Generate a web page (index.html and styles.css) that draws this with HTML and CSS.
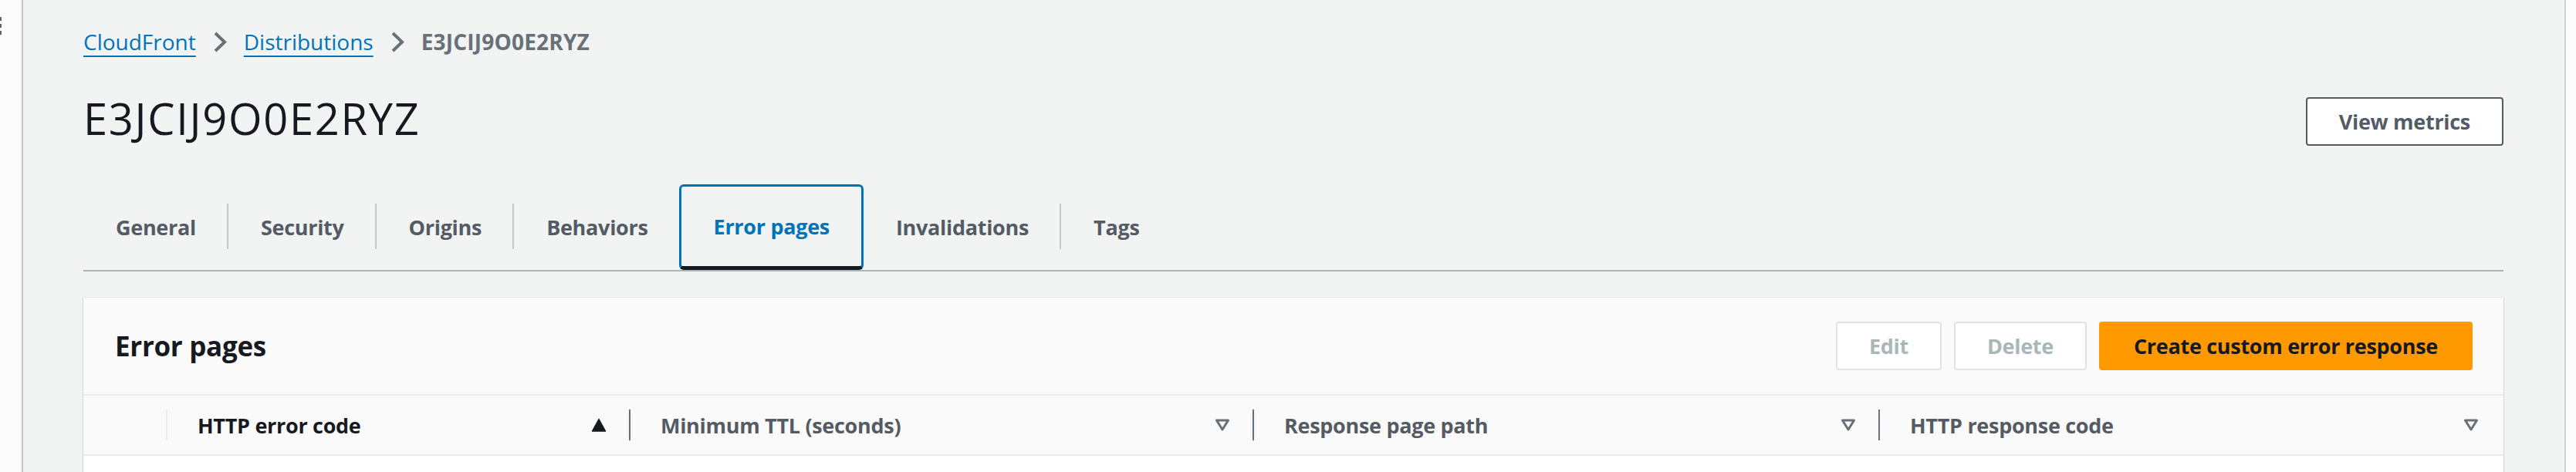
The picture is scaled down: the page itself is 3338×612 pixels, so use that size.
FILE: index.html
```html
<!DOCTYPE html>
<html lang="en">
<head>
<meta charset="utf-8">
<title>E3JCIJ9O0E2RYZ | CloudFront</title>
<link rel="stylesheet" href="styles.css">
</head>
<body>
<div class="app">
  <div class="gutter">
    <span class="grip"></span>
    <span class="grip"></span>
    <span class="grip"></span>
  </div>
  <main class="main">
    <nav class="crumbs">
      <a class="crumb-link" href="#">CloudFront</a>
      <svg class="chev" width="18" height="29" viewBox="0 0 18 29"><polyline points="3,3 15,14.5 3,26" fill="none" stroke="#687078" stroke-width="4"/></svg>
      <a class="crumb-link" href="#">Distributions</a>
      <svg class="chev" width="18" height="29" viewBox="0 0 18 29"><polyline points="3,3 15,14.5 3,26" fill="none" stroke="#687078" stroke-width="4"/></svg>
      <span class="crumb-current">E3JCIJ9O0E2RYZ</span>
    </nav>

    <div class="page-head">
      <h1 class="title">E3JCIJ9O0E2RYZ</h1>
      <button class="btn btn-normal btn-head">View metrics</button>
    </div>

    <div class="tabs">
      <div class="tab">General</div>
      <span class="tab-sep"></span>
      <div class="tab">Security</div>
      <span class="tab-sep"></span>
      <div class="tab">Origins</div>
      <span class="tab-sep"></span>
      <div class="tab">Behaviors</div>
      <span class="tab-sep"></span>
      <div class="tab tab-active">Error pages</div>
      <span class="tab-sep"></span>
      <div class="tab">Invalidations</div>
      <span class="tab-sep"></span>
      <div class="tab">Tags</div>
    </div>

    <section class="panel">
      <div class="panel-head">
        <h2 class="panel-title">Error pages</h2>
        <div class="actions">
          <button class="btn btn-disabled">Edit</button>
          <button class="btn btn-disabled">Delete</button>
          <button class="btn btn-primary">Create custom error response</button>
        </div>
      </div>
      <div class="thead">
        <div class="th th-select"></div>
        <div class="th">
          <span class="col-sep col-sep-light"></span>
          <span class="th-label th-sorted">HTTP error code</span>
          <svg class="sort" width="20" height="18" viewBox="0 0 20 18"><path d="M10 1.5 L18.5 17 H1.5 Z" fill="#16191f" stroke="#16191f" stroke-width="1.5" stroke-linejoin="round"/></svg>
        </div>
        <div class="th">
          <span class="col-sep"></span>
          <span class="th-label">Minimum TTL (seconds)</span>
          <svg class="sort" width="20" height="16" viewBox="0 0 20 16"><path d="M2.5 2 H17.5 L10 14 Z" fill="none" stroke="#687078" stroke-width="3" stroke-linejoin="round"/></svg>
        </div>
        <div class="th">
          <span class="col-sep"></span>
          <span class="th-label">Response page path</span>
          <svg class="sort" width="20" height="16" viewBox="0 0 20 16"><path d="M2.5 2 H17.5 L10 14 Z" fill="none" stroke="#687078" stroke-width="3" stroke-linejoin="round"/></svg>
        </div>
        <div class="th th-last">
          <span class="col-sep"></span>
          <span class="th-label">HTTP response code</span>
          <svg class="sort" width="20" height="16" viewBox="0 0 20 16"><path d="M2.5 2 H17.5 L10 14 Z" fill="none" stroke="#687078" stroke-width="3" stroke-linejoin="round"/></svg>
        </div>
      </div>
      <div class="tbody"></div>
    </section>
  </main>
  <div class="side"></div>
</div>
</body>
</html>
```

FILE: styles.css
```css
* { box-sizing: border-box; }

html, body {
  margin: 0;
  padding: 0;
  background: #ffffff;
}

body {
  font-family: "Open Sans", "Noto Sans", Arial, sans-serif;
  color: #16191f;
}

.app {
  display: flex;
  width: 3338px;
  height: 612px;
  overflow: hidden;
}

.gutter {
  flex: 0 0 28px;
  display: flex;
  flex-direction: column;
  gap: 4px;
  padding-top: 22px;
  background: #fcfcfc;
}

.grip {
  display: block;
  width: 2px;
  height: 5px;
  background: #5f6368;
}

.main {
  flex: 1;
  display: flex;
  flex-direction: column;
  background: #f2f3f3;
  border-left: 2px solid #c4c6c6;
  border-right: 2px solid #d0d3d3;
  padding: 34px 79px 0 78px;
}

.side {
  flex: 0 0 13px;
  background: #fcfcfc;
}

/* Breadcrumbs */
.crumbs {
  display: flex;
  align-items: center;
  gap: 22px;
  height: 40px;
  font-size: 28px;
  line-height: 40px;
}

.crumb-link {
  color: #0073bb;
  text-decoration: underline;
  text-decoration-thickness: 2px;
  text-underline-offset: 7px;
}

.chev { display: block; }

.crumb-current {
  color: #687078;
  font-weight: 700;
  letter-spacing: 0.2px;
}

/* Page header */
.page-head {
  display: flex;
  justify-content: space-between;
  align-items: flex-start;
  margin-top: 47px;
}

.title {
  margin: 0;
  font-size: 56px;
  font-weight: 400;
  line-height: 64px;
  letter-spacing: 1.7px;
  color: #16191f;
}

.btn {
  font-family: inherit;
  font-size: 27px;
  letter-spacing: -0.3px;
  font-weight: 700;
  height: 63px;
  padding: 0 41px;
  border-radius: 4px;
  border: 2px solid transparent;
  line-height: 1;
  cursor: pointer;
}

.btn-head { margin-top: 5px; }

.btn-normal {
  background: #ffffff;
  border-color: #545b64;
  color: #545b64;
}

.btn-disabled {
  background: #ffffff;
  border-color: #dfe3e3;
  color: #aab7b8;
}

.btn-primary {
  background: #ff9900;
  border-color: #ff9900;
  color: #16191f;
  padding: 0 43px;
}

/* Tabs */
.tabs {
  display: flex;
  align-items: center;
  margin-top: 50px;
  height: 113px;
  border-bottom: 2px solid #aab7b8;
}

.tab {
  height: 111px;
  display: flex;
  align-items: center;
  padding: 0 40px 0 42px;
  font-size: 27px;
  letter-spacing: -0.3px;
  font-weight: 700;
  color: #545b64;
  align-self: flex-start;
}

.tab-sep {
  flex: 0 0 2px;
  height: 59px;
  background: #c2c9ca;
  align-self: flex-start;
  margin-top: 25px;
}

.tab-active {
  position: relative;
  z-index: 1;
  margin: 0 -2px;
  padding: 0 41px 0 42px;
  color: #0073bb;
  border: 3px solid #0073bb;
  border-bottom: 5px solid #16191f;
  border-radius: 6px;
}

/* Panel */
.panel {
  margin-top: 33px;
  background: #fafafa;
  border-top: 1px solid #e6e9e9;
  box-shadow: 0 1px 1px 0 rgba(0, 28, 36, 0.2), 1px 1px 1px 0 rgba(0, 28, 36, 0.1), -1px 1px 1px 0 rgba(0, 28, 36, 0.1);
}

.panel-head {
  height: 125px;
  display: flex;
  align-items: center;
  justify-content: space-between;
  padding: 0 40px 0 41px;
}

.panel-title {
  margin: 0;
  font-size: 35px;
  letter-spacing: -0.3px;
  font-weight: 700;
  color: #16191f;
  line-height: 1;
}

.actions {
  display: flex;
  gap: 16px;
}

.thead {
  display: grid;
  grid-template-columns: 107px 600px 808px 811px 1fr;
  height: 80px;
  border-top: 2px solid #eaeded;
  border-bottom: 2px solid #eaeded;
  background: #fafafa;
}

.th {
  display: flex;
  align-items: center;
  padding-right: 29px;
}

.th-last { padding-right: 32px; }

.col-sep {
  flex: 0 0 2px;
  height: 40px;
  background: #687078;
}

.col-sep-light { background: #eaeded; }

.th-label {
  flex: 1;
  margin-left: 39px;
  font-size: 27px;
  letter-spacing: -0.3px;
  font-weight: 700;
  color: #545b64;
  white-space: nowrap;
}

.th-sorted { color: #16191f; }

.sort { display: block; }

.tbody {
  height: 60px;
  background: #ffffff;
}
```
